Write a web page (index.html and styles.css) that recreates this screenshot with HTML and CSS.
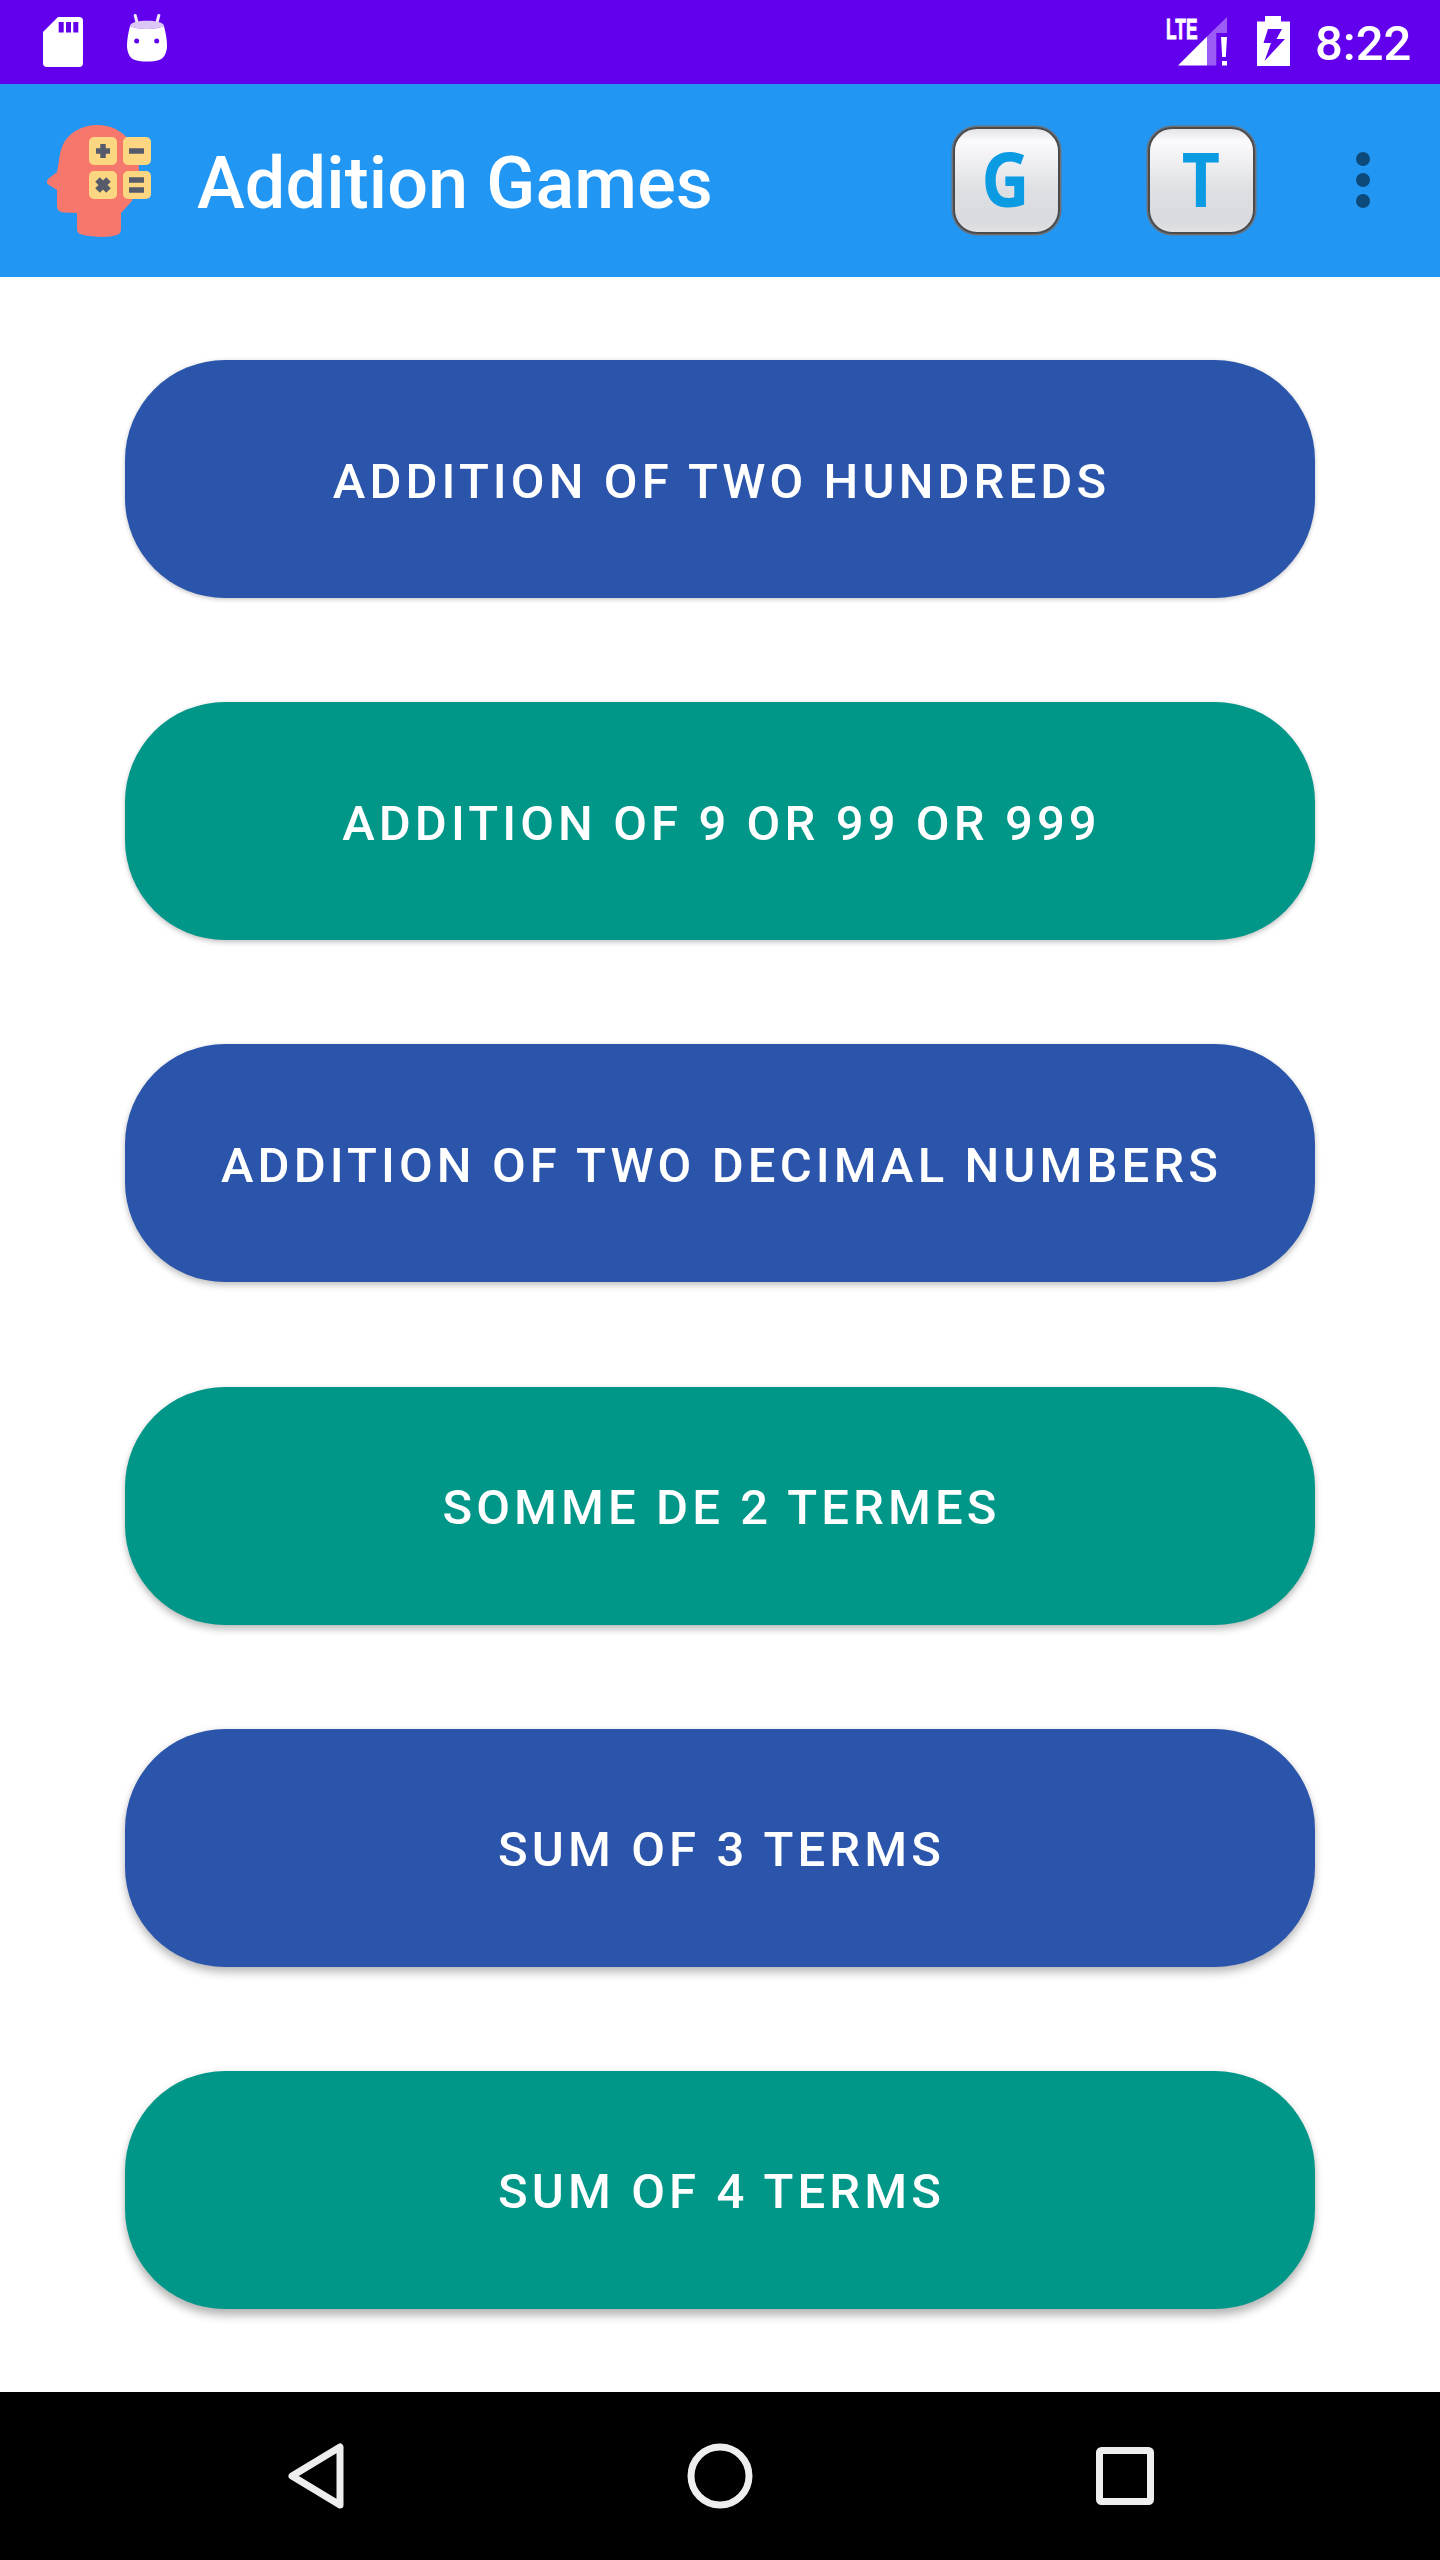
FILE: index.html
```html
<!DOCTYPE html>
<html lang="en">
<head>
<meta charset="utf-8">
<title>Addition Games</title>
<link rel="stylesheet" href="styles.css">
</head>
<body>
<div class="screen">
  <header class="status">
    <div class="status-left">
      <svg class="sd" viewBox="0 0 40 50"><path fill="#fff" d="M15 0H36a4 4 0 0 1 4 4V46a4 4 0 0 1-4 4H4a4 4 0 0 1-4-4V15Z"/><path fill="#6200ee" d="M15.700 5h5v10.500h-5zM23 5h5v10.500h-5zM30.300 5h5v10.500h-5z"/></svg>
      <svg class="droid" viewBox="0 0 40 48"><path stroke="#f0e8fb" stroke-width="3" stroke-linecap="round" d="M8.200 1.500L10.300 9.300M31.800 1.500L29.700 9.300"/><path fill="#dcc6f5" d="M3 12C3 5 37 5 37 12C30 16 10 16 3 12Z"/><path fill="#fff" d="M3 12C1 20 0 26 0 32C0 38 3 45 8 46C15 48 25 48 32 46C37 45 40 38 40 32C40 26 39 20 37 12C30 16 10 16 3 12Z"/><circle cx="9.700" cy="27" r="2.500" fill="#6200ee"/><circle cx="29.700" cy="27" r="2.500" fill="#6200ee"/></svg>
    </div>
    <div class="status-right">
      <span class="net">
        <span class="lte">LTE</span>
        <svg class="signal" viewBox="0 0 49 49"><path fill="#fff" d="M0 48.500L29 19.500V48.500Z"/><path fill="#9b5cf5" d="M29 19.500L49 0V16H38.300V48.500H29Z"/><path fill="#fff" d="M43 20H49L47.800 40H44.200ZM44 44h5v4.500h-5z"/></svg>
      </span>
      <svg class="battery" viewBox="0 0 33 50"><path fill="#fff" d="M8 0h16v5.500h9V50H0V5.500h8Z"/><path fill="#6200ee" d="M11 13H25L19.500 23H28L7.500 45L14 27H6.500Z"/></svg>
      <span class="time">8:22</span>
    </div>
  </header>
  <div class="appbar">
    <svg class="logo" viewBox="0 0 104 112">
      <path fill="#f6776c" d="M51 0C35 0 20 8 15 22C12 30 12 38 10 47L1 54C-1 57 0 59 2 60L10 65V80C10 85 12 87 17 87.500L30 88V104C30 108 33 109 36 110C45 112 62 113 70 110C73 109 74 107 74 104V88L85 76L92 45C92 20 75 0 51 0Z"/>
      <g fill="#fdd681">
        <rect x="42" y="12" width="28" height="28" rx="5"/><rect x="76" y="12" width="28" height="28" rx="5"/>
        <rect x="42" y="46" width="28" height="28" rx="5"/><rect x="76" y="46" width="28" height="28" rx="5"/>
      </g>
      <path stroke="#565b6b" stroke-width="5.500" fill="none" d="M49 26h14M56 19v14M82 26h15M82 55h15M82 65h15"/>
      <path stroke="#565b6b" stroke-width="6.500" fill="none" d="M50.500 54.500l11 11M61.500 54.500l-11 11"/>
    </svg>
    <h1 class="title">Addition Games</h1>
    <div class="actions">
      <button class="key"><span class="key-letter">G</span></button>
      <button class="key"><span class="key-letter">T</span></button>
      <div class="more"><i></i><i></i><i></i></div>
    </div>
  </div>
  <main class="menu">
    <button class="game blue">ADDITION OF TWO HUNDREDS</button>
    <button class="game teal">ADDITION OF 9 OR 99 OR 999</button>
    <button class="game blue">ADDITION OF TWO DECIMAL NUMBERS</button>
    <button class="game teal">SOMME DE 2 TERMES</button>
    <button class="game blue">SUM OF 3 TERMS</button>
    <button class="game teal">SUM OF 4 TERMS</button>
  </main>
  <nav class="navbar">
    <svg class="nav-back" viewBox="0 0 56 66"><path fill="none" stroke="#eee" stroke-width="7" stroke-linejoin="round" d="M52 4V62L4 33Z"/></svg>
    <svg class="nav-home" viewBox="0 0 66 66"><circle cx="33" cy="33" r="29" fill="none" stroke="#eee" stroke-width="7"/></svg>
    <svg class="nav-recent" viewBox="0 0 58 58"><rect x="3.500" y="3.500" width="51" height="51" rx="2" fill="none" stroke="#eee" stroke-width="7"/></svg>
  </nav>
</div>
</body>
</html>
```

FILE: styles.css
```css
* { box-sizing: border-box; }
html, body { margin: 0; padding: 0; }
body { background: #fff; font-family: Roboto, "Noto Sans", sans-serif; }
.screen { width: 1440px; height: 2560px; display: flex; flex-direction: column; overflow: hidden; }
.status { height: 84px; background: #6200ee; display: flex; justify-content: space-between; color: #fff; flex: none; }
.status-left { display: flex; gap: 44px; padding: 14px 0 0 43px; align-items: flex-start; }
.sd { width: 40px; height: 50px; margin-top: 3px; }
.droid { width: 40px; height: 48px; }
.status-right { display: flex; align-items: flex-start; padding: 16px 30px 0 0; }
.net { display: block; position: relative; width: 61px; height: 50px; margin-right: 30px; }
.lte { position: absolute; left: 0; top: 0; font: 700 29px/26px "Liberation Sans", sans-serif; -webkit-text-stroke: .8px #fff; transform: scaleX(.6); transform-origin: left top; }
.signal { position: absolute; right: 0; top: 1px; width: 49px; height: 49px; }
.battery { width: 33px; height: 50px; margin-right: 27px; }
.time { margin: 0 0 0 -2px; width: 95px; font-size: 49px; font-weight: 500; line-height: 56px; white-space: nowrap; }
.appbar { height: 193px; background: #2196f3; display: flex; align-items: center; flex: none; padding-left: 47px; }
.logo { width: 104px; height: 112px; flex: none; }
.title { margin: 6px 0 0 46px; font-size: 72px; font-weight: 500; letter-spacing: .1px; color: #fff; line-height: 82px; }
.actions { margin: 0 0 1px auto; display: flex; align-items: center; }
.key { width: 107px; height: 107px; padding: 0 0 5px; border: 2px solid #4b4b4b; box-shadow: 0 0 0 1.5px #6f7176; border-radius: 24px; background: linear-gradient(#e4e4e8, #fbfbfd 12%, #dfe0e4 58%, #d9dadf 90%, #e2e2e5); margin: 0 88.5px 0 0; }
.key + .key { margin-right: 101px; }
.key-letter { display: inline-block; color: #0a9be3; font: 700 76px/1 "Open Sans", sans-serif; transform: scaleX(.87); }
.more { display: flex; flex-direction: column; gap: 7px; margin-right: 70px; }
.more i { display: block; width: 14px; height: 14px; border-radius: 50%; background: #0d4a7c; }
.menu { flex: 1; display: flex; flex-direction: column; gap: 104.2px; padding: 83px 125px 0; }
.game { height: 238px; flex: none; border: 0; border-radius: 100px; color: #fff; font: 500 49px/1 Roboto, sans-serif; letter-spacing: 4.1px; padding: 4px 0 0 3px; }
.blue { background: #2a55ab; }
.teal { background: #009688; }
.game:nth-child(1) { box-shadow: 0 2px 4px rgba(0,0,0,.16), 0 0 4px rgba(0,0,0,.08); }
.game:nth-child(2) { box-shadow: 0 3px 5px rgba(0,0,0,.18), 0 0 4px rgba(0,0,0,.08); }
.game:nth-child(3) { box-shadow: 0 4px 6px rgba(0,0,0,.2), 0 0 5px rgba(0,0,0,.08); }
.game:nth-child(4) { box-shadow: 0 5px 7px rgba(0,0,0,.22), 0 0 5px rgba(0,0,0,.08); }
.game:nth-child(5) { box-shadow: 0 6px 8px rgba(0,0,0,.24), 0 0 6px rgba(0,0,0,.08); }
.game:nth-child(6) { box-shadow: 0 7px 9px rgba(0,0,0,.26), 0 0 6px rgba(0,0,0,.08); }
.navbar { height: 168px; background: #000; flex: none; display: flex; align-items: center; }
.nav-back { width: 56px; height: 66px; margin-left: 288px; }
.nav-home { width: 66px; height: 66px; margin-left: 343px; }
.nav-recent { width: 58px; height: 58px; margin-left: 343px; }
```
